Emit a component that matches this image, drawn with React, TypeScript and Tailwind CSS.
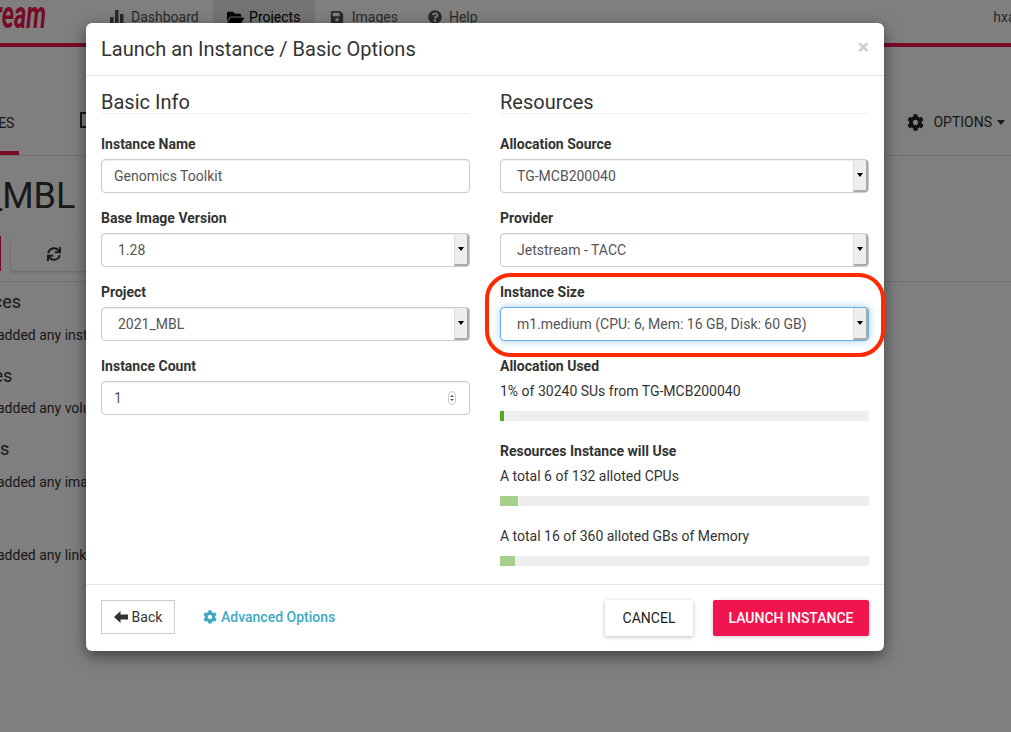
import React from "react";
import { FaCog, FaFolderOpen, FaQuestionCircle, FaSave, FaSync } from "react-icons/fa";

const BarsIcon: React.FC = () => (
  <svg width="14" height="14" viewBox="0 0 14 14" fill="currentColor">
    <rect x="0" y="7" width="3.5" height="7" />
    <rect x="5" y="0" width="3.5" height="14" />
    <rect x="10" y="4" width="3.5" height="10" />
  </svg>
);

const BackArrow: React.FC = () => (
  <svg width="14" height="12" viewBox="0 0 14 12" fill="currentColor">
    <path d="M0 6 L6.5 0 V3.5 H14 V8.5 H6.5 V12 Z" />
  </svg>
);

const Field: React.FC<{ label: string; children: React.ReactNode }> = ({ label, children }) => (
  <div className="h-[74px]">
    <div className="h-[15px] text-[14px] leading-[15px] font-bold text-[#333]">{label}</div>
    <div className="mt-[7px]">{children}</div>
  </div>
);

const Select: React.FC<{ value: string; focus?: boolean }> = ({ value, focus }) => (
  <div
    className={
      "flex h-[34px] items-stretch rounded-[4px] border bg-white text-[14px] text-[#555] " +
      (focus
        ? "border-[#66afe9] shadow-[0_0_8px_rgba(102,175,233,0.6)]"
        : "border-[#ccc] shadow-[inset_0_1px_1px_rgba(0,0,0,0.075)]")
    }
  >
    <div className="flex flex-1 items-center pl-[16px]">{value}</div>
    <div className="flex w-[15px] items-center justify-center rounded-r-[3px] border-r-2 border-b-2 border-l border-r-[#aaa] border-b-[#aaa] border-l-[#ddd] bg-[#eee]">
      <div className="h-0 w-0 border-x-[3.5px] border-t-[4px] border-x-transparent border-t-black" />
    </div>
  </div>
);

const Bar: React.FC<{ pct: number; color: string }> = ({ pct, color }) => (
  <div className="h-[10px] bg-[#eee]">
    <div className={"h-full " + color} style={{ width: `${pct}%` }} />
  </div>
);

const Background: React.FC = () => (
  <div className="h-full bg-white font-['Roboto',sans-serif] text-[#333]">
    <header className="flex h-[47px] items-stretch overflow-hidden border-b-4 border-[#f0144f] text-[14px] text-[#555]">
      <div className="w-[110px] shrink-0 overflow-hidden">
        <div className="-mt-[5px] w-[46px] origin-right scale-x-[0.62] whitespace-nowrap text-right text-[38px] leading-[40px] font-bold italic text-[#f0144f]">
          <span className="float-right">Jetstream</span>
        </div>
      </div>
      <div className="flex items-center gap-[7px] pb-[9px]"><BarsIcon /><span>Dashboard</span></div>
      <div className="ml-[14px] flex w-[102px] items-center justify-center gap-[5px] bg-[#e7e7e7] pb-[9px] text-black">
        <FaFolderOpen className="text-[17px]" />Projects
      </div>
      <div className="ml-[15px] flex items-center gap-[8px] pb-[9px]"><FaSave className="text-[14px]" />Images</div>
      <div className="ml-[30px] flex items-center gap-[7px] pb-[9px]"><FaQuestionCircle className="text-[14px]" />Help</div>
      <div className="-mr-[25px] ml-auto flex items-center pb-[9px]">hxaorg</div>
    </header>

    <div className="mt-[45px] flex h-[64px] items-stretch border-b border-[#ddd] text-[14px]">
      <div className="flex w-[19px] items-center overflow-hidden border-b-4 border-[#f0144f] pt-[4px]">
        <span className="-ml-[60px]">INSTANCES</span>
      </div>
      <div className="mt-[20px] ml-[61px] h-[16px] w-[14px] border-2 border-[#333]" />
      <div className="mr-[6px] ml-auto flex items-center pb-[2px]">
        <FaCog className="mr-[9px] text-[17px] text-[#222]" />
        <span>OPTIONS</span>
        <div className="ml-[5px] h-0 w-0 border-x-[4px] border-t-[5px] border-x-transparent border-t-[#333]" />
      </div>
    </div>

    <h1 className="mt-[20px] -ml-[95px] text-[36px] leading-[40px]">2021_MBL</h1>

    <div className="mt-[20px] flex h-[46px] items-start border-b border-[#ddd] pb-[11px]">
      <div className="h-[35px] w-[1px] bg-[#f0144f]" />
      <div className="ml-[10px] flex h-[35px] w-[86px] items-center justify-center rounded-[2px] bg-white shadow-[0_1px_3px_rgba(0,0,0,0.2)]">
        <FaSync className="text-[14px]" />
      </div>
    </div>

    <h4 className="mt-[10px] -ml-[57px] text-[18px] leading-[20px]">Instances</h4>
    <p className="mt-[13px] -ml-[77px] whitespace-nowrap text-[14px] leading-[20px]">You haven't added any instances</p>
    <h4 className="mt-[21px] -ml-[58px] text-[18px] leading-[20px]">Volumes</h4>
    <p className="mt-[12px] -ml-[77px] whitespace-nowrap text-[14px] leading-[20px]">You haven't added any volumes</p>
    <h4 className="mt-[21px] -ml-[50px] text-[18px] leading-[20px]">Images</h4>
    <p className="mt-[13px] -ml-[77px] whitespace-nowrap text-[14px] leading-[20px]">You haven't added any images</p>
    <p className="mt-[53px] -ml-[77px] whitespace-nowrap text-[14px] leading-[20px]">You haven't added any links</p>
  </div>
);

export default function App() {
  return (
    <div className="relative h-[732px] w-[1011px] overflow-hidden">
      <Background />
      <div className="absolute inset-0 bg-black/50" />

      <div className="absolute top-[23px] left-[86px] flex h-[628px] w-[798px] flex-col rounded-[6px] bg-white font-['Roboto',sans-serif] text-[#333] shadow-[0_5px_15px_rgba(0,0,0,0.5)]">
        <div className="flex h-[53px] items-center justify-between border-b border-[#e5e5e5] pr-[15px] pl-[15px]">
          <h2 className="text-[20px] leading-[22px]">Launch an Instance / Basic Options</h2>
          <span className="-mt-[4px] text-[21px] leading-[21px] font-bold text-[#ccc]">×</span>
        </div>

        <div className="flex flex-1 gap-[30px] px-[15px]">
          <div className="w-[369px]">
            <div className="mt-[14px] mb-[23px] h-[24px] border-b border-[#eee] text-[20px] leading-[24px]">Basic Info</div>
            <Field label="Instance Name">
              <div className="flex h-[34px] items-center rounded-[4px] border border-[#ccc] pl-[12px] text-[14px] text-[#555] shadow-[inset_0_1px_1px_rgba(0,0,0,0.075)]">
                Genomics Toolkit
              </div>
            </Field>
            <Field label="Base Image Version">
              <Select value="1.28" />
            </Field>
            <Field label="Project">
              <Select value="2021_MBL" />
            </Field>
            <Field label="Instance Count">
              <div className="flex h-[34px] items-center justify-between rounded-[4px] border border-[#ccc] pr-[13px] pl-[12px] text-[14px] text-[#555] shadow-[inset_0_1px_1px_rgba(0,0,0,0.075)]">
                <span>1</span>
                <div className="flex h-[14px] w-[8px] flex-col items-center justify-center gap-[2px] rounded-[4px] border border-[#ccc]">
                  <div className="h-0 w-0 border-x-[2px] border-b-[2px] border-x-transparent border-b-[#555]" />
                  <div className="h-0 w-0 border-x-[2px] border-t-[2px] border-x-transparent border-t-[#555]" />
                </div>
              </div>
            </Field>
          </div>

          <div className="w-[369px]">
            <div className="mt-[14px] mb-[23px] h-[24px] border-b border-[#eee] text-[20px] leading-[24px]">Resources</div>
            <Field label="Allocation Source">
              <Select value="TG-MCB200040" />
            </Field>
            <Field label="Provider">
              <Select value="Jetstream - TACC" />
            </Field>
            <Field label="Instance Size">
              <Select value="m1.medium (CPU: 6, Mem: 16 GB, Disk: 60 GB)" focus />
            </Field>
            <div className="h-[15px] text-[14px] leading-[15px] font-bold">Allocation Used</div>
            <p className="mt-[7px] text-[14px] leading-[20px]">1% of 30240 SUs from TG-MCB200040</p>
            <div className="mt-[10px]"><Bar pct={1} color="bg-[#5aa91e]" /></div>
            <div className="mt-[23px] h-[15px] text-[14px] leading-[15px] font-bold">Resources Instance will Use</div>
            <p className="mt-[7px] text-[14px] leading-[20px]">A total 6 of 132 alloted CPUs</p>
            <div className="mt-[10px]"><Bar pct={5} color="bg-[#a5d18a]" /></div>
            <p className="mt-[20px] text-[14px] leading-[20px]">A total 16 of 360 alloted GBs of Memory</p>
            <div className="mt-[10px]"><Bar pct={4} color="bg-[#a5d18a]" /></div>
          </div>
        </div>

        <div className="flex h-[67px] items-start border-t border-[#e5e5e5] px-[15px] pt-[15px] text-[14px]">
          <div className="flex h-[34px] w-[74px] items-center justify-center gap-[4px] border border-[#ccc]">
            <BackArrow />Back
          </div>
          <div className="ml-[28px] flex h-[34px] items-center gap-[4px] font-medium text-[#3fa9c5]">
            <FaCog className="text-[14px]" />Advanced Options
          </div>
          <div className="ml-auto flex h-[36px] w-[88px] items-center justify-center rounded-[2px] bg-white text-[#212121] shadow-[0_1px_4px_rgba(0,0,0,0.25)]">CANCEL</div>
          <div className="ml-[20px] flex h-[36px] w-[156px] items-center justify-center rounded-[2px] bg-[#f0144f] font-medium text-white shadow-[0_1px_4px_rgba(0,0,0,0.2)]">LAUNCH INSTANCE</div>
        </div>
      </div>

      <div className="absolute top-[273px] left-[485px] h-[84px] w-[400px] rounded-[26px] border-4 border-[#ff2a00]" />
    </div>
  );
}
